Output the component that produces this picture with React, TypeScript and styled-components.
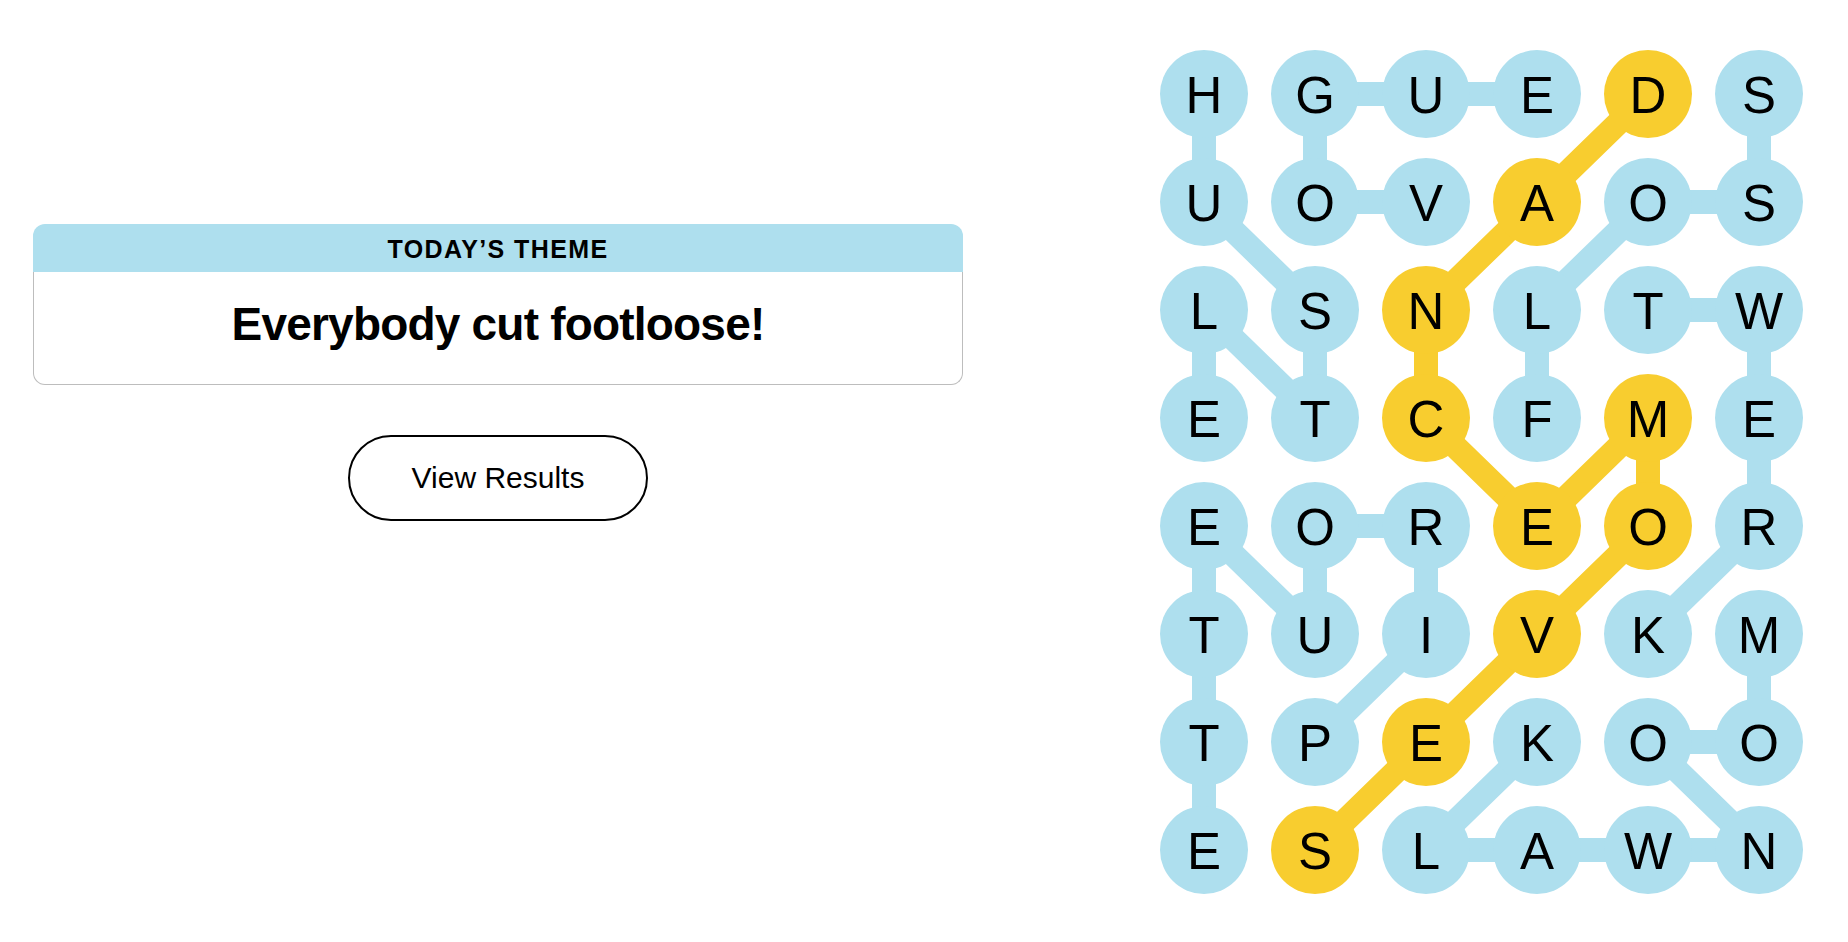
import styled, { createGlobalStyle } from 'styled-components';

const GlobalStyle = createGlobalStyle`
  html, body {
    margin: 0;
    padding: 0;
    background: #fff;
  }
  body {
    font-family: 'Liberation Sans', Arial, sans-serif;
    color: #000;
  }
`;

const BLUE = '#aedfee';
const YELLOW = '#f8cd2f';
const CELL = 88;
const STEP_X = 111;
const STEP_Y = 108;

const letters = [
  'HGUEDS',
  'UOVAOS',
  'LSNLTW',
  'ETCFME',
  'EOREOR',
  'TUIVKM',
  'TPEKOO',
  'ESLAWN',
];

// cells of the spangram (row, col)
const spangram: [number, number][] = [
  [0, 4], [1, 3], [2, 2], [3, 2], [4, 3], [3, 4], [4, 4], [5, 3], [6, 2], [7, 1],
];

const words: [number, number][][] = [
  // HUSTLE
  [[0, 0], [1, 0], [2, 1], [3, 1], [2, 0], [3, 0]],
  // VOGUE
  [[1, 2], [1, 1], [0, 1], [0, 2], [0, 3]],
  // FLOSS
  [[3, 3], [2, 3], [1, 4], [1, 5], [0, 5]],
  // TWERK
  [[2, 4], [2, 5], [3, 5], [4, 5], [5, 4]],
  // PIROUETTE
  [[6, 1], [5, 2], [4, 2], [4, 1], [5, 1], [4, 0], [5, 0], [6, 0], [7, 0]],
  // MOONWALK
  [[5, 5], [6, 5], [6, 4], [7, 5], [7, 4], [7, 3], [7, 2], [6, 3]],
];

const isSpangram = (r: number, c: number) =>
  spangram.some(([sr, sc]) => sr === r && sc === c);

const Page = styled.div`
  display: flex;
  align-items: flex-start;
  gap: 197px;
  padding: 50px 0 0 33px;
  min-height: 942px;
  box-sizing: border-box;
`;

const LeftPanel = styled.div`
  width: 930px;
  padding-top: 174px;
  display: flex;
  flex-direction: column;
  align-items: center;
  gap: 50px;
`;

const ThemeCard = styled.div`
  width: 100%;
  display: flex;
  flex-direction: column;
`;

const ThemeHeader = styled.div`
  height: 48px;
  background: ${BLUE};
  border-radius: 12px 12px 0 0;
  display: flex;
  align-items: center;
  justify-content: center;
  font-weight: 700;
  font-size: 25px;
  letter-spacing: 1.4px;
  padding-top: 2px;
  box-sizing: border-box;
`;

const ThemeBody = styled.div`
  height: 113px;
  border: 1.5px solid #bdbdbd;
  border-top: none;
  border-radius: 0 0 12px 12px;
  display: flex;
  align-items: center;
  justify-content: center;
  box-sizing: border-box;
  font-weight: 700;
  font-size: 46px;
  letter-spacing: -0.8px;
  padding-bottom: 8px;
`;

const ResultsButton = styled.button`
  width: 300px;
  height: 86px;
  border: 2px solid #000;
  border-radius: 43px;
  background: #fff;
  color: #000;
  font-family: 'Liberation Sans', Arial, sans-serif;
  font-size: 30px;
  cursor: pointer;
`;

const Board = styled.div`
  position: relative;
  width: ${5 * STEP_X + CELL}px;
  height: ${7 * STEP_Y + CELL}px;
`;

const Connectors = styled.svg`
  position: absolute;
  inset: 0;
  width: 100%;
  height: 100%;
`;

const LetterGrid = styled.div`
  position: relative;
  display: grid;
  grid-template-columns: repeat(6, ${CELL}px);
  grid-auto-rows: ${CELL}px;
  column-gap: ${STEP_X - CELL}px;
  row-gap: ${STEP_Y - CELL}px;
`;

const Letter = styled.div<{ $found: boolean }>`
  width: ${CELL}px;
  height: ${CELL}px;
  border-radius: 50%;
  background: ${(p) => (p.$found ? YELLOW : BLUE)};
  display: flex;
  align-items: center;
  justify-content: center;
  font-size: 51px;
  line-height: 1;
  padding-top: 2px;
  box-sizing: border-box;
`;

const cx = (c: number) => CELL / 2 + c * STEP_X;
const cy = (r: number) => CELL / 2 + r * STEP_Y;

function Path({ cells, color }: { cells: [number, number][]; color: string }) {
  const points = cells.map(([r, c]) => `${cx(c)},${cy(r)}`).join(' ');
  return (
    <polyline
      points={points}
      fill="none"
      stroke={color}
      strokeWidth={24}
      strokeLinejoin="round"
    />
  );
}

export default function App() {
  return (
    <>
      <GlobalStyle />
      <Page>
        <LeftPanel>
          <ThemeCard>
            <ThemeHeader>TODAY’S THEME</ThemeHeader>
            <ThemeBody>Everybody cut footloose!</ThemeBody>
          </ThemeCard>
          <ResultsButton>View Results</ResultsButton>
        </LeftPanel>
        <Board>
          <Connectors>
            {words.map((w, i) => (
              <Path key={i} cells={w} color={BLUE} />
            ))}
            <Path cells={spangram} color={YELLOW} />
          </Connectors>
          <LetterGrid>
            {letters.map((row, r) =>
              row.split('').map((ch, c) => (
                <Letter key={`${r}-${c}`} $found={isSpangram(r, c)}>
                  {ch}
                </Letter>
              ))
            )}
          </LetterGrid>
        </Board>
      </Page>
    </>
  );
}
